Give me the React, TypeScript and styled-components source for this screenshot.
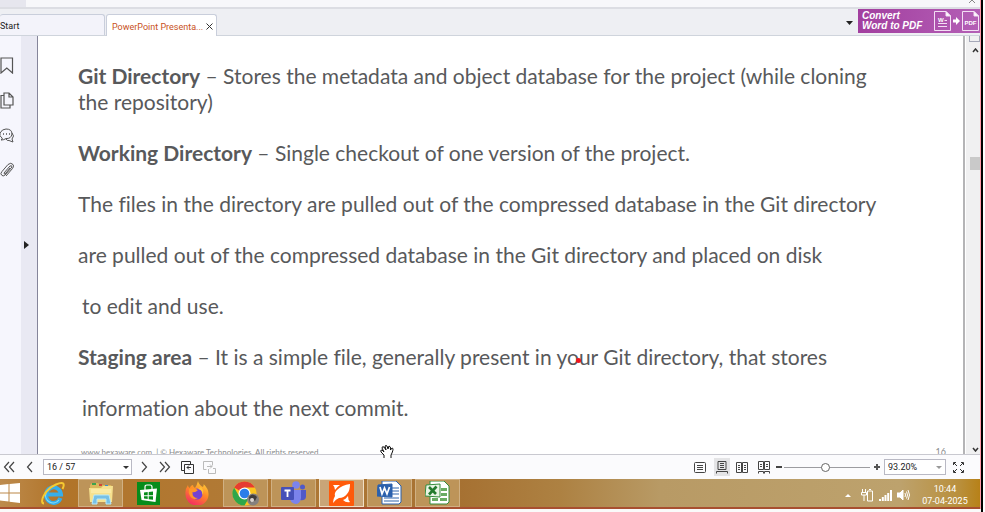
import React from "react";
import styled, { createGlobalStyle, css } from "styled-components";

const GlobalStyle = createGlobalStyle`
  * { box-sizing: border-box; }
  body { margin: 0; background: #fff; font-family: Roboto, "Noto Sans", sans-serif; }
  button, input, select { font-family: inherit; margin: 0; }
  svg { display: block; flex: none; }
`;

const Frame = styled.div`
  height: 100vh;
  margin-right: 2px;
  border-right: 2px solid #000;
  display: flex;
  flex-direction: column;
  overflow: hidden;
`;

const Window = styled.div`
  flex: 1;
  min-height: 0;
  display: flex;
  flex-direction: column;
  position: relative;
  border-right: 1px solid #ff9aa8;
`;

const TopStrip = styled.div`
  height: 9px;
  flex: none;
  display: flex;
  justify-content: flex-end;
  padding-right: 4px;
  background: linear-gradient(90deg, #e6e6ee 0 26px, #f7f7fa 26px);
  border-bottom: 2px solid #dcdde3;
`;

const TabBar = styled.div`
  height: 27px;
  flex: none;
  display: flex;
  align-items: flex-end;
  background: #eeeff3;
  border-bottom: 1px solid #cfd4dc;
`;

const tabBox = css`
  height: 21px;
  border: 1px solid #c9cedb;
  border-bottom: 0;
  border-radius: 3px 3px 0 0;
  font-size: 9px;
  line-height: 18px;
`;

const StartTab = styled.button`
  ${tabBox}
  width: 105px;
  padding: 2px 0 0;
  text-align: left;
  border-left: 0;
  background: #f3f3fa;
  color: #222;
`;

const ActiveTab = styled.div`
  ${tabBox}
  width: 111px;
  margin: 0 0 -1px 1px;
  height: 22px;
  padding: 2px 3px 0 5px;
  display: flex;
  align-items: center;
  justify-content: space-between;
  background: #fff;
`;

const plain = css`
  border: 0;
  padding: 0;
  background: none;
  display: flex;
  align-items: center;
  justify-content: center;
  color: #444;
`;

const TabLabel = styled.button`
  ${plain}
  font-size: 9px;
  line-height: 18px;
  color: #c8511b;
  white-space: nowrap;
`;

const IconButton = styled.button<{ $w?: number; $h?: number; $on?: boolean }>`
  ${plain}
  flex: none;
  width: ${(p) => p.$w ?? 20}px;
  height: ${(p) => p.$h ?? 20}px;
  background: ${(p) => (p.$on ? "#e4e4e6" : "none")};
`;

const TabTools = styled.div`
  margin-left: auto;
  align-self: stretch;
  display: flex;
  align-items: flex-start;
`;

const Banner = styled.a`
  height: 24px;
  width: 122px;
  display: flex;
  align-items: center;
  gap: 2px;
  padding: 0 1px 0 4px;
  background: linear-gradient(90deg, #a23f9f, #b45fb6);
  color: #fff;
  text-decoration: none;
  font: italic bold 10px/10px "Liberation Sans", Arial, sans-serif;
`;

const BannerText = styled.span`
  flex: 1;
  white-space: nowrap;
`;

const Body = styled.div`
  flex: 1;
  min-height: 0;
  display: flex;
  overflow: hidden;
`;

const Sidebar = styled.nav`
  width: 21px;
  flex: none;
  display: flex;
  flex-direction: column;
  gap: 15px;
  padding-top: 19px;
  background: #f6f6fd;
`;

const Splitter = styled.div`
  width: 17px;
  flex: none;
  display: flex;
  align-items: center;
  background: #e9e9f3;
  border-right: 1px solid #85859a;
`;

const Page = styled.main`
  flex: 1;
  min-width: 0;
  overflow: hidden;
  padding: 27px 25px 0 40px;
  background: #fff;
  border-right: 2px solid #b4b4b6;
  font-family: Lato, sans-serif;
  font-size: 21px;
  font-variant-ligatures: no-common-ligatures;
  line-height: 26px;
  color: #58595b;
`;

const Para = styled.p<{ $indent?: boolean }>`
  margin: 0 0 25px;
  max-width: 810px;
  padding-left: ${(p) => (p.$indent ? 4 : 0)}px;
`;

const PageFooter = styled.footer`
  display: flex;
  justify-content: space-between;
  padding-left: 3px;
  margin-right: -8px;
  font-size: 8px;
  line-height: 12px;
  color: #8a8b8d;
`;

const PageNumber = styled.span`
  font-size: 9px;
`;

const ScrollBar = styled.div`
  width: 15px;
  flex: none;
  display: flex;
  flex-direction: column;
  align-items: flex-end;
  background: #f0f0f1;
  border-left: 1px solid #fff;
`;

const SplitBox = styled.div`
  width: 11px;
  height: 6px;
  border: 1px solid #a5a8b8;
  border-top: 0;
`;

const Track = styled.div`
  flex: 1;
  width: 10px;
  padding-top: 99px;
`;

const Thumb = styled.div`
  height: 13px;
  background: #c9c9c9;
`;

const StatusBar = styled.div`
  height: 25px;
  flex: none;
  display: flex;
  align-items: center;
  background: #fbfbfd;
  border-top: 1px solid #c9c9d0;
`;

const PageSelect = styled.select`
  appearance: none;
  width: 89px;
  height: 16px;
  margin: 0 6px 0 2px;
  padding: 0 3px;
  border: 1px solid #b9b9c4;
  border-radius: 0;
  font-size: 9px;
  line-height: 14px;
  color: #222;
  background: #fff;
`;

const SelectWrap = styled.label<{ $light?: boolean }>`
  position: relative;
  display: flex;
  &::after {
    content: "";
    position: absolute;
    right: ${(p) => (p.$light ? 4 : 9)}px;
    top: 7px;
    border: 3px solid transparent;
    border-top-color: ${(p) => (p.$light ? "#999" : "#333")};
    border-bottom: 0;
    pointer-events: none;
  }
`;

const ZoomSelect = styled(PageSelect)`
  width: 62px;
  margin: 0;
`;

const ViewTools = styled.div`
  margin-left: auto;
  padding-right: 10px;
  display: flex;
  align-items: center;
`;

const Slider = styled.input`
  appearance: none;
  width: 86px;
  height: 10px;
  margin: 0;
  background: linear-gradient(#9c9ca0, #9c9ca0) center / 100% 1px no-repeat;
  &::-webkit-slider-thumb {
    appearance: none;
    width: 9px;
    height: 9px;
    border: 1px solid #666;
    border-radius: 50%;
    background: #fff;
  }
`;

const TaskBar = styled.div`
  height: 30px;
  flex: none;
  display: flex;
  align-items: stretch;
  background: linear-gradient(90deg, #bd8b4d 0, #b17429 60px, #b17a36 240px, #a67132 460px, #ad8142 560px, #b89a65 660px, #bda26d 900px, #b98f3b 960px, #b78118 100%);
  border-bottom: 2px solid #a84f30;
`;

const BottomEdge = styled.div`
  height: 3px;
  flex: none;
  background: #fafafa;
`;

const Task = styled.button<{ $w: number; $mode?: "open" | "active" }>`
  ${plain}
  width: ${(p) => p.$w}px;
  flex: none;
  border: ${(p) => (p.$mode ? "1px solid" : "0")};
  border-color: ${(p) => (p.$mode === "active" ? "#f0dfc5" : "#d0b083")};
  background: ${(p) => (p.$mode === "active" ? "#c9a578" : p.$mode ? "#bd9459" : "none")};
`;

const StartButton = styled(Task)`
  justify-content: flex-start;
`;

const Apps = styled.div`
  display: flex;
  gap: 3px;
`;

const Tray = styled.div`
  margin-left: auto;
  display: flex;
  align-items: center;
  padding-top: 4px;
`;

const Clock = styled.time`
  width: 66px;
  margin-right: 2px;
  text-align: center;
  font-size: 9px;
  line-height: 12px;
  color: #fff;
  white-space: nowrap;
`;

const Pointer = styled.div<{ $x: number; $y: number }>`
  position: absolute;
  left: ${(p) => p.$x}px;
  top: ${(p) => p.$y}px;
  pointer-events: none;
`;

const LaserDot = styled(Pointer)`
  width: 5px;
  height: 5px;
  border-radius: 50%;
  background: #f0141e;
`;

const Chevrons = ({ d }: { d: string }) => (
  <svg width="12" height="12" viewBox="0 0 12 12" fill="none" stroke="#444" strokeWidth="1.2"><path d={d} /></svg>
);

const DocIcon = ({ label }: { label: string }) => (
  <svg width="17" height="20" viewBox="0 0 17 20" fill="none" stroke="#f3dff4">
    <path d="M.5 .5H12L16.500 5V19.500H.5Z" />
    <path d="M12 .5V5H16.500Z" fill="#fff" />
    {label === "W" ? (
      <>
        <text x="4" y="11" fontSize="6" fontStyle="normal" fontWeight="700" fill="#fff" stroke="none" fontFamily="Liberation Sans">W</text>
        <path d="M10.500 9.500H13M4 12.500H13M4 15.500H13" />
      </>
    ) : (
      <text x="8.500" y="14" fontSize="6" fontStyle="normal" fontWeight="700" textAnchor="middle" fill="#fff" stroke="none" fontFamily="Liberation Sans">PDF</text>
    )}
  </svg>
);

const views = {
  single: <><rect x=".5" y="1.500" width="11" height="10" rx="1" /><path d="M3 4.500H9M3 6.500H9M3 8.500H9" /></>,
  scroll: <><path d="M2 .5H10V8.500H2ZM.5 12.500V10.500H11.500V12.500M4 2.500H8M4 4.500H8M4 6.500H8" /></>,
  facing: <><path d="M.5 1.500H5.500V11.500H.5ZM6.500 1.500H11.500V11.500H6.500ZM2 4.500H4M2 6.500H4M2 8.500H4M8 4.500H10M8 6.500H10M8 8.500H10" /></>,
  facingScroll: <><path d="M.5 .5V8.500H5.500V.5ZM6.500 .5V8.500H11.500V.5ZM.5 12.500V10.500H5.500V12.500M6.500 12.500V10.500H11.500V12.500M2 3.500H4M2 5.500H4M8 3.500H10M8 5.500H10" /></>,
};

const ViewIcon = ({ kind }: { kind: keyof typeof views }) => (
  <svg width="12" height="13" viewBox="0 0 12 13" fill="none" stroke="#444">{views[kind]}</svg>
);

const WindowsIcon = () => (
  <svg width="20" height="20" viewBox="0 0 20 20" fill="#fff"><path d="M0 2L8.500 1V9.500H0ZM9.500 .9L20 0V9.500H9.500ZM0 10.500H8.500V18.500L0 17.500ZM9.500 10.500H20V20L9.500 18.700Z" /></svg>
);

const IeIcon = () => (
  <svg width="26" height="25" viewBox="0 0 26 25" fill="none">
    <path d="M20.500 17A7.500 7.800 0 1 1 21 13.500H8" stroke="#36aeea" strokeWidth="4" />
    <path d="M19 19A7.500 7.500 0 0 1 6 12" stroke="#80dbfc" strokeWidth="1.200" />
    <path d="M4 22.500C-1 22 4 9 16 3.500C24 0 25 3 22.500 8" stroke="#f6c931" strokeWidth="2" />
  </svg>
);

const FolderIcon = () => (
  <svg width="26" height="24" viewBox="0 0 26 24">
    <path d="M2 4L4 2H10L12 4H23L24 6V21H2Z" fill="#d9b85b" />
    <path d="M4 2H8V4H4Z" fill="#3ca34d" /><path d="M11 3H14V5H11Z" fill="#d34836" /><path d="M17 4H20V6H17Z" fill="#3d8fcc" />
    <path d="M1 7H13L15 5H25L24 21H2Z" fill="#f6e18e" />
    <path d="M3 9H23M3 11H23" stroke="#fff3b9" />
    <path d="M4 23L6 14H21L23 23H18V18H9V23Z" fill="#77c0e5" stroke="#b8e9fa" />
  </svg>
);

const StoreIcon = () => (
  <svg width="23" height="23" viewBox="0 0 23 23">
    <path d="M0 0H23V23H0Z" fill="#078c1b" />
    <path d="M8 8V5Q8 3 10 3H13Q15 3 15 5V7" fill="none" stroke="#fff" strokeWidth="1.200" />
    <path d="M3 8L20 6.500L18.500 20L4.500 18Z" fill="#fff" />
    <path d="M7 10.500L10.700 10V13.200H7ZM11.700 9.900L16 9.400V13.200H11.700ZM7 14.200H10.700V17L7 16.500ZM11.700 14.200H16V17.700L11.700 17.200Z" fill="#078c1b" />
  </svg>
);

const FirefoxIcon = () => (
  <svg width="24" height="24" viewBox="0 0 24 24">
    <defs><linearGradient id="fox" x1=".8" y1="0" x2=".3" y2="1"><stop stopColor="#ffd43b" /><stop offset=".45" stopColor="#ff8a25" /><stop offset="1" stopColor="#f52a64" /></linearGradient></defs>
    <path d="M13 0Q14 4 18 6Q19 4 18.500 3Q24 8 23.500 14A11.500 11 0 0 1 .5 13Q0 8 3 4Q3 6 4.500 7Q6 4 8 4Q8 6 10 7Q12 4 13 0Z" fill="url(#fox)" />
    <circle cx="12" cy="13" r="5.500" fill="#7542d1" />
    <path d="M4 8Q9 6 13 9Q10 12 7.500 11Q7 17 13 17Q8 20 5 15Q3 12 4 8Z" fill="#ff9629" />
    <path d="M13 8Q18 9 17 14Q20 10 16 6Z" fill="#ffc13a" />
  </svg>
);

const ChromeIcon = () => (
  <svg width="28" height="25" viewBox="0 0 28 25">
    <circle cx="12.500" cy="12.500" r="12" fill="#fbc41f" />
    <path d="M12.500 12.500L2.100 6.500A12 12 0 0 1 22.900 6.500H12.500Z" fill="#e63c31" />
    <path d="M2.100 6.500A12 12 0 0 0 12.500 24.500L17.700 15.500L7.300 15.500Z" fill="#2da64b" />
    <circle cx="12.500" cy="12.500" r="6" fill="#fff" /><circle cx="12.500" cy="12.500" r="4.800" fill="#2c7de9" />
    <circle cx="21" cy="18.500" r="6" fill="#85807e" /><path d="M17 16Q20 11 25 16L23 20L20 17L18 22Z" fill="#403c3d" /><circle cx="20" cy="19" r="2" fill="#d9d2cf" />
  </svg>
);

const TeamsIcon = () => (
  <svg width="26" height="24" viewBox="0 0 26 24">
    <circle cx="21.500" cy="6" r="2.500" fill="#5059c9" /><path d="M17 9H25V16Q24 20 19 19Z" fill="#5059c9" />
    <circle cx="15" cy="4" r="3.800" fill="#7b83eb" /><path d="M9 9H20V17Q19 23 14.500 23Q9 22 9 17Z" fill="#7b83eb" />
    <rect y="6" width="13" height="13" rx="1" fill="#4650b8" /><path d="M3.500 9.500H9.500M6.500 9.500V16" stroke="#fff" strokeWidth="1.800" />
  </svg>
);

const FoxitIcon = () => (
  <svg width="25" height="25" viewBox="0 0 25 25">
    <rect width="25" height="25" rx="1" fill="#ff5a0a" />
    <path d="M21 3Q21 10 18 13Q15 17 10 17Q7 18 4 22Q4 18 6 15Q5 12 8 9Q13 4 21 3Z" fill="#fff" />
    <path d="M4 4H11Q8 6 6 9Q6 6 4 4ZM14 19Q17 18 19 15Q19 19 21 21Q17 22 14 19Z" fill="#fff" />
  </svg>
);

const OfficeIcon = ({ kind }: { kind: "W" | "X" }) => {
  const color = kind === "W" ? "#2b61ad" : "#348c3b";
  return (
    <svg width="25" height="24" viewBox="0 0 25 24">
      <path d="M5 0H19L24 5V21L22 23H5Z" fill="#fff" stroke={color} />
      {kind === "W" ? <path d="M15 7H22M15 10H22M15 13H22M7 17H22M7 20H22" stroke="#7699c9" strokeWidth="1.500" /> : <path d="M16 7H22V10H16ZM16 12H22V15H16ZM7 17H13V20H7ZM15 17H22V20H15Z" fill="#68ac62" />}
      <path d="M1 4L15 3V16L0 15Z" fill={kind === "W" ? color : "#e8f4e4"} stroke={color} />
      {kind === "W" ? <path d="M3 6L5 13L7.500 7L10 13L12.500 6" fill="none" stroke="#fff" strokeWidth="1.700" /> : <path d="M4 6L11 13M11.500 5.500L4 13.500" stroke="#247b2e" strokeWidth="2.600" />}
    </svg>
  );
};

const slide: { lead?: string; text: string; indent?: boolean }[] = [
  { lead: "Git Directory", text: " – Stores the metadata and object database for the project (while cloning the repository)" },
  { lead: "Working Directory", text: " – Single checkout of one version of the project." },
  { text: "The files in the directory are pulled out of the compressed database in the Git directory" },
  { text: "are pulled out of the compressed database in the Git directory and placed on disk" },
  { text: "to edit and use.", indent: true },
  { lead: "Staging area", text: " – It is a simple file, generally present in your Git directory, that stores" },
  { text: "information about the next commit.", indent: true },
];

export default function App() {
  return (
    <Frame>
      <GlobalStyle />
      <Window>
        <TopStrip><svg width="8" height="5" viewBox="0 0 8 5" fill="none" stroke="#888"><path d="M1 3L4 0L7 3" /></svg></TopStrip>
        <TabBar>
          <StartTab>Start</StartTab>
          <ActiveTab>
            <TabLabel>PowerPoint Presenta...</TabLabel>
            <IconButton $w={7} $h={16} aria-label="Close tab"><svg width="7" height="7" viewBox="0 0 7 7" stroke="#333"><path d="M.5 .5L6.500 6.500M6.500 .5L.5 6.500" /></svg></IconButton>
          </ActiveTab>
          <TabTools>
            <IconButton $w={17} $h={28} aria-label="Tab list"><svg width="7" height="4" viewBox="0 0 7 4"><path d="M0 0H7L3.500 4Z" fill="#222" /></svg></IconButton>
            <Banner href="#convert">
              <BannerText>Convert<br />Word to PDF</BannerText>
              <DocIcon label="W" />
              <svg width="7" height="8" viewBox="0 0 7 8" fill="#fff"><path d="M0 2.500H3V0L7 4L3 8V5.500H0Z" /></svg>
              <DocIcon label="PDF" />
            </Banner>
          </TabTools>
        </TabBar>
        <Body>
          <Sidebar>
            <IconButton $w={14} aria-label="Bookmarks"><svg width="14" height="17" viewBox="0 0 14 17" fill="none" stroke="#555" strokeWidth="1.200"><path d="M1 1H12.500V16L6.800 11L1 16Z" /></svg></IconButton>
            <IconButton $w={14} aria-label="Pages"><svg width="14" height="17" viewBox="0 0 14 17" fill="none" stroke="#555" strokeWidth="1.200"><path d="M4 1H9L13 5V13H4ZM9 1V5H13M4 3.500H1V16H10V13" /></svg></IconButton>
            <IconButton $w={14} aria-label="Comments"><svg width="14" height="15" viewBox="0 0 14 15" fill="none" stroke="#555"><path d="M2 10Q-1 8 0 5Q2 1 6 1Q12 1 12 6Q11 11 6 10.500Q4 12 1 12Q3 11 2 10M12 5Q15 8 12 11L13 14L9 12.500Q7 13 6 11" /><path d="M3 6H4M6 6H7M9 6H10" strokeWidth="1.500" /></svg></IconButton>
            <IconButton $w={14} aria-label="Attachments"><svg width="14" height="16" viewBox="0 0 14 16" fill="none" stroke="#555"><path d="M4 11L10 4Q12 3 12 5L5 13Q3 15 1.500 13Q0 11.500 2 9.500L8 2.500Q11 0 13 2.500Q14.500 4 12.500 6.500L6 14M4 11Q4 13 6 11L10 6" /></svg></IconButton>
          </Sidebar>
          <Splitter><IconButton $w={10} aria-label="Expand panel"><svg width="5" height="8" viewBox="0 0 5 8"><path d="M0 0V8L5 4Z" fill="#222" /></svg></IconButton></Splitter>
          <Page>
            {slide.map((p) => <Para key={p.text} $indent={p.indent}>{p.lead && <b>{p.lead}</b>}{p.text}</Para>)}
            <PageFooter><span>www.hexaware.com &nbsp;| © Hexaware Technologies. All rights reserved.</span><PageNumber>16</PageNumber></PageFooter>
          </Page>
          <ScrollBar>
            <SplitBox />
            <IconButton $w={10} $h={16} aria-label="Scroll up"><svg width="7" height="5" viewBox="0 0 7 5" fill="none" stroke="#333" strokeWidth="1.500"><path d="M1 4L3.500 1L6 4" /></svg></IconButton>
            <Track><Thumb /></Track>
            <IconButton $w={10} $h={10} aria-label="Scroll down"><svg width="7" height="5" viewBox="0 0 7 5" fill="none" stroke="#333" strokeWidth="1.500"><path d="M1 1L3.500 4L6 1" /></svg></IconButton>
          </ScrollBar>
        </Body>
        <StatusBar>
          <IconButton $w={18} aria-label="First page"><Chevrons d="M6 1L1.500 6L6 11M11 1L6.500 6L11 11" /></IconButton>
          <IconButton $w={23} aria-label="Previous page"><Chevrons d="M8 1L3.500 6L8 11" /></IconButton>
          <SelectWrap><PageSelect aria-label="Page"><option>16 / 57</option></PageSelect></SelectWrap>
          <IconButton $w={11} aria-label="Next page"><Chevrons d="M4 1L8.500 6L4 11" /></IconButton>
          <IconButton $w={32} aria-label="Last page"><Chevrons d="M1 1L5.500 6L1 11M6 1L10.500 6L6 11" /></IconButton>
          <IconButton $w={13} aria-label="Previous view"><svg width="13" height="13" viewBox="0 0 13 13" fill="none" stroke="#333"><path d="M3.500 9.500H.5V.5H9.500V3.500M3.500 3.500H12.500V12.500H3.500ZM10 6.500H6M8 4.500L6 6.500L8 8.500" /></svg></IconButton>
          <IconButton $w={31} aria-label="Next view"><svg width="13" height="13" viewBox="0 0 13 13" fill="none" stroke="#bbb"><path d="M3.500 8.500H.5V.5H9.500V4.500M4 5.500H9M7 3.500L9 5.500L7 7.500M5.500 8V12.500H12.500V7.500H10" /></svg></IconButton>
          <ViewTools>
            <IconButton $w={28} aria-label="Single page"><ViewIcon kind="single" /></IconButton>
            <IconButton $w={16} $h={18} $on aria-label="Continuous"><ViewIcon kind="scroll" /></IconButton>
            <IconButton $w={24} aria-label="Facing"><ViewIcon kind="facing" /></IconButton>
            <IconButton $w={20} aria-label="Continuous facing"><ViewIcon kind="facingScroll" /></IconButton>
            <IconButton $w={10} aria-label="Zoom out"><svg width="6" height="2" viewBox="0 0 6 2"><path d="M0 0H6V2H0Z" fill="#444" /></svg></IconButton>
            <Slider type="range" aria-label="Zoom" defaultValue={48} />
            <IconButton $w={14} aria-label="Zoom in"><svg width="6" height="6" viewBox="0 0 6 6"><path d="M2 0H4V2H6V4H4V6H2V4H0V2H2Z" fill="#555" /></svg></IconButton>
            <SelectWrap $light><ZoomSelect aria-label="Zoom level"><option>93.20%</option></ZoomSelect></SelectWrap>
            <IconButton $w={24} aria-label="Full screen"><svg width="11" height="11" viewBox="0 0 11 11" fill="none" stroke="#333"><path d="M.5 3V.5H3M8 .5H10.500V3M10.500 8V10.500H8M3 10.500H.5V8M1 1L4 4M10 1L7 4M10 10L7 7M1 10L4 7" /></svg></IconButton>
          </ViewTools>
        </StatusBar>
        <TaskBar>
          <Apps>
            <StartButton $w={28} aria-label="Windows start"><WindowsIcon /></StartButton>
            <Task $w={44} aria-label="Internet Explorer"><IeIcon /></Task>
            <Task $w={45} $mode="open" aria-label="File Explorer"><FolderIcon /></Task>
            <Task $w={45} aria-label="Store"><StoreIcon /></Task>
            <Task $w={46} aria-label="Firefox"><FirefoxIcon /></Task>
            <Task $w={45} $mode="open" aria-label="Chrome"><ChromeIcon /></Task>
            <Task $w={45} $mode="open" aria-label="Teams"><TeamsIcon /></Task>
            <Task $w={45} $mode="active" aria-label="Foxit Reader"><FoxitIcon /></Task>
            <Task $w={45} $mode="open" aria-label="Word"><OfficeIcon kind="W" /></Task>
            <Task $w={45} $mode="open" aria-label="Excel"><OfficeIcon kind="X" /></Task>
          </Apps>
          <Tray>
            <IconButton $w={18} aria-label="Hidden icons"><svg width="6" height="3" viewBox="0 0 6 3"><path d="M3 0L6 3H0Z" fill="#fff" /></svg></IconButton>
            <IconButton $w={20} aria-label="Power"><svg width="13" height="13" viewBox="0 0 13 13" fill="none" stroke="#fff"><path d="M6.500 2H11.500V12H6.500ZM8 .5H10M1.500 0V3M4.500 0V3M.5 3.500H5.500V6H.5ZM3 6V12" /></svg></IconButton>
            <IconButton $w={17} aria-label="Network"><svg width="13" height="11" viewBox="0 0 13 11" fill="#fff"><path d="M0 9H2V11H0ZM2.800 7H4.800V11H2.800ZM5.500 5H7.500V11H5.500ZM8.200 3H10.200V11H8.200ZM11 0H13V11H11Z" /></svg></IconButton>
            <IconButton $w={18} aria-label="Volume"><svg width="13" height="12" viewBox="0 0 13 12" fill="none" stroke="#fff"><path d="M0 4H3L6 1V11L3 8H0Z" fill="#fff" /><path d="M8 4Q9 6 8 8M9.500 2.500Q11.500 6 9.500 9.500M11 1Q14 6 11 11" /></svg></IconButton>
            <Clock>10:44<br />07-04-2025</Clock>
          </Tray>
        </TaskBar>
        <LaserDot $x={576} $y={358} />
        <Pointer $x={380} $y={445}>
          <svg width="14" height="15" viewBox="0 0 14 15" fill="#fff" stroke="#111"><path d="M4 13V10L1 7Q0 5 2 5L4 7L2 3Q2 1 4 2L6 5L5 1Q6 0 7 1L8 4L9 1Q11 1 10.500 5L12 3Q14 3 12 8L11 10V13" /></svg>
        </Pointer>
      </Window>
      <BottomEdge />
    </Frame>
  );
}
